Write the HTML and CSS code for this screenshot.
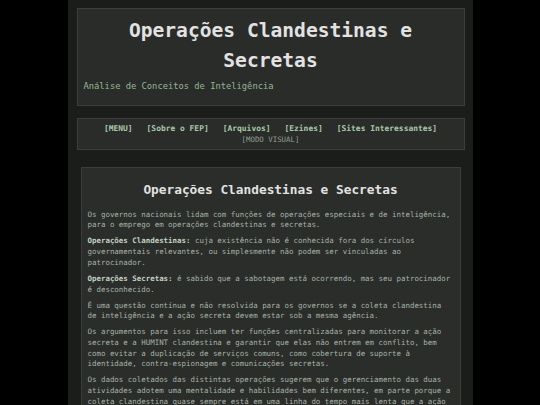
FILE: index.html
```html
<!DOCTYPE html>
<html lang="pt">
<head>
<meta charset="utf-8">
<title>Operações Clandestinas e Secretas</title>
<link rel="stylesheet" href="styles.css">
</head>
<body>
<div class="page">
  <header class="masthead">
    <h1 class="site-title">Operações Clandestinas e Secretas</h1>
    <p class="tagline">Análise de Conceitos de Inteligência</p>
  </header>
  <nav class="nav">
    <div class="nav-links">
      <a href="#">[MENU]</a>
      <a href="#">[Sobre o FEP]</a>
      <a href="#">[Arquivos]</a>
      <a href="#">[Ezines]</a>
      <a href="#">[Sites Interessantes]</a>
    </div>
    <div class="nav-mode"><a href="#">[MODO VISUAL]</a></div>
  </nav>
  <main class="article">
    <h2 class="article-title">Operações Clandestinas e Secretas</h2>
    <p>Os governos nacionais lidam com funções de operações especiais e de inteligência, para o emprego em operações clandestinas e secretas.</p>
    <p><strong>Operações Clandestinas:</strong> cuja existência não é conhecida fora dos círculos governamentais relevantes, ou simplesmente não podem ser vinculadas ao patrocinador.</p>
    <p><strong>Operações Secretas:</strong> é sabido que a sabotagem está ocorrendo, mas seu patrocinador é desconhecido.</p>
    <p>É uma questão contínua e não resolvida para os governos se a coleta clandestina de inteligência e a ação secreta devem estar sob a mesma agência.</p>
    <p>Os argumentos para isso incluem ter funções centralizadas para monitorar a ação secreta e a HUMINT clandestina e garantir que elas não entrem em conflito, bem como evitar a duplicação de serviços comuns, como cobertura de suporte à identidade, contra-espionagem e comunicações secretas.</p>
    <p>Os dados coletados das distintas operações sugerem que o gerenciamento das duas atividades adotem uma mentalidade e habilidades bem diferentes, em parte porque a coleta clandestina quase sempre está em uma linha do tempo mais lenta que a ação secreta.</p>
  </main>
</div>
</body>
</html>
```

FILE: styles.css
```css
html, body {
  margin: 0;
  padding: 0;
  background: #000000;
}
body {
  font-family: "DejaVu Sans Mono", "Liberation Mono", monospace;
  color: #a3b3a3;
}
.page {
  width: 405px;
  margin: 0 auto;
  box-sizing: border-box;
  min-height: 405px;
  padding: 8px 8px 0 9px;
  background: #1b1d1b;
}
.masthead {
  background: #2a2c2a;
  border: 1px solid #3b3e3b;
  padding: 7px 6px 12px;
}
.site-title {
  margin: 0 0 4px;
  font-size: 19.6px;
  line-height: 30px;
  font-weight: bold;
  text-align: center;
  color: #e2e2e2;
}
.tagline {
  margin: 0;
  font-size: 8.77px;
  line-height: 13px;
  color: #93b893;
}
.nav {
  margin-top: 12px;
  background: #2a2c2a;
  border: 1px solid #3b3e3b;
  padding: 4px 6px 3px;
  text-align: center;
}
.nav a {
  text-decoration: none;
}
.nav-links {
  display: flex;
  justify-content: center;
  gap: 14px;
  font-size: 7.94px;
  line-height: 11.4px;
  font-weight: bold;
}
.nav-links a {
  color: #a9c9a9;
}
.nav-mode {
  font-size: 7.4px;
  line-height: 11.4px;
}
.nav-mode a {
  color: #8f9f8f;
}
.article {
  margin: 17px 4px 0;
  background: #2b2d2b;
  border: 1px solid #3b3e3b;
  border-bottom: none;
  padding: 6px 6px 0;
}
.article-title {
  margin: 8px 0 12px;
  font-size: 12.8px;
  line-height: 16px;
  font-weight: bold;
  text-align: center;
  color: #e2e2e2;
}
.article p {
  margin: 0 0 5.33px;
  font-size: 7.45px;
  line-height: 10.67px;
}
.article strong {
  color: #c3d3c3;
}
```
